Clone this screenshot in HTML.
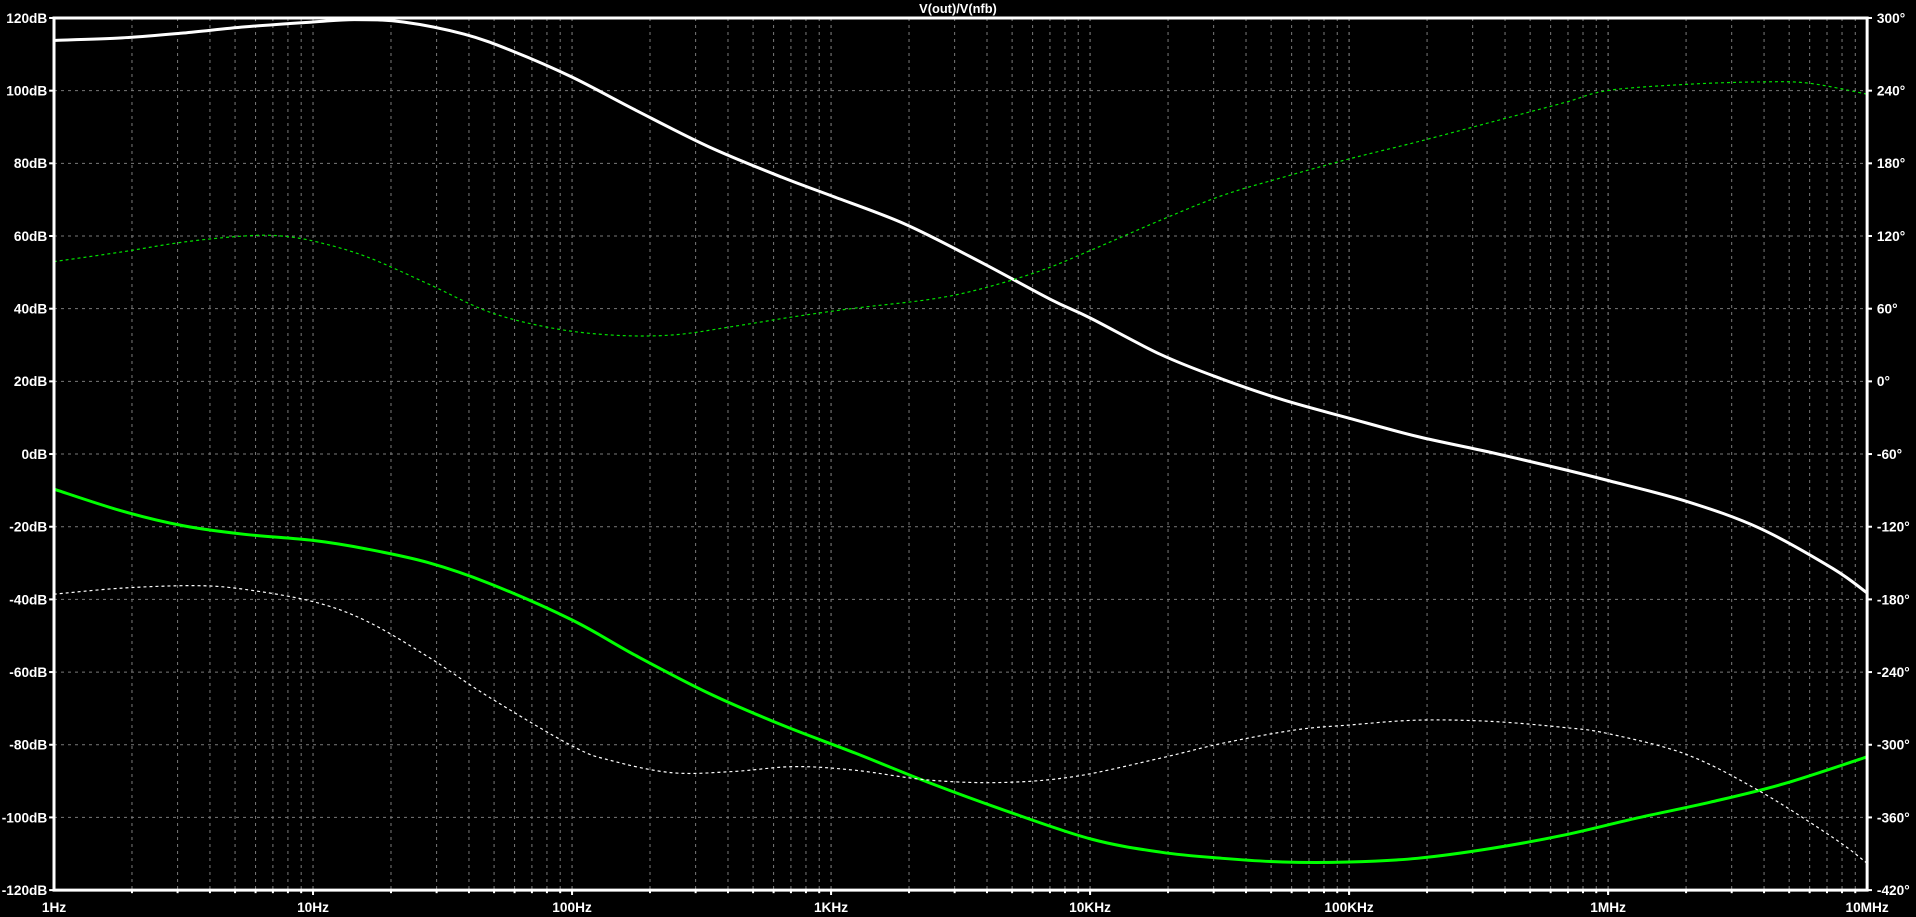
<!DOCTYPE html>
<html><head><meta charset="utf-8">
<style>
html,body{margin:0;padding:0;background:#000;overflow:hidden}
svg{display:block}
text{font-family:"Liberation Sans",sans-serif;fill:#fff}
</style></head>
<body>
<svg id="s" width="1916" height="917" viewBox="0 0 1568 750" preserveAspectRatio="none" xmlns="http://www.w3.org/2000/svg">
<rect width="1568" height="750" fill="#000"/>
<g id="grid"></g>
<g id="curves"></g>
<g id="axes"></g>
<text x="784" y="10.5" font-size="10.5" font-weight="bold" text-anchor="middle">V(out)/V(nfb)</text>
</svg>
<script>
var NS="http://www.w3.org/2000/svg";
var L=44.2,R=1528,T=14.7,B=728,D=(R-L)/7,DY=(B-T)/12;
function el(p,n,a,txt){var e=document.createElementNS(NS,n);for(var k in a)e.setAttribute(k,a[k]);if(txt!==undefined)e.textContent=txt;document.getElementById(p).appendChild(e);return e;}
for(var d=0;d<7;d++){for(var m=1;m<=10;m++){var x=L+D*(d+Math.log10(m));if(m==1&&d==0)continue;if(m==10&&d==6)continue;
el("grid","line",{x1:x,y1:T,x2:x,y2:B,stroke:"#7a7a7a","stroke-width":1,"stroke-dasharray":"3,4","vector-effect":"non-scaling-stroke"});
el("axes","line",{x1:x,y1:B,x2:x,y2:B+(m==10?4:2.5),stroke:"#fff","stroke-width":2,"vector-effect":"non-scaling-stroke"});}}
for(var i=1;i<12;i++){var y=T+DY*i;el("grid","line",{x1:L,y1:y,x2:R,y2:y,stroke:"#7a7a7a","stroke-width":1,"stroke-dasharray":"3,4","vector-effect":"non-scaling-stroke"});}
el("axes","rect",{x:L,y:T,width:R-L,height:B-T,fill:"none",stroke:"#fff","stroke-width":3,"vector-effect":"non-scaling-stroke"});
for(var i=0;i<=12;i++){var y=T+DY*i;var db=120-20*i;var ph=300-60*i;
el("axes","line",{x1:L-4,y1:y,x2:L,y2:y,stroke:"#fff","stroke-width":2,"vector-effect":"non-scaling-stroke"});
el("axes","line",{x1:R,y1:y,x2:R+4,y2:y,stroke:"#fff","stroke-width":2,"vector-effect":"non-scaling-stroke"});
el("axes","text",{x:L-5.5,y:y+4,"font-size":11.2,"font-weight":"bold","text-anchor":"end"},db+"dB");
el("axes","text",{x:R+8,y:y+4,"font-size":11.2,"font-weight":"bold"},ph+"\u00b0");}
var fl=["1Hz","10Hz","100Hz","1KHz","10KHz","100KHz","1MHz","10MHz"];
for(var d=0;d<8;d++){el("axes","text",{x:L+D*d,y:746,"font-size":11.2,"font-weight":"bold","text-anchor":"middle"},fl[d]);}
function curve(pts,col,w,dash){
 var s="M"+pts[0][0]+","+pts[0][1];
 for(var i=0;i<pts.length-1;i++){var p0=pts[i-1]||pts[i],p1=pts[i],p2=pts[i+1],p3=pts[i+2]||p2;
 s+=" C"+(p1[0]+(p2[0]-p0[0])/6)+","+(p1[1]+(p2[1]-p0[1])/6)+" "+(p2[0]-(p3[0]-p1[0])/6)+","+(p2[1]-(p3[1]-p1[1])/6)+" "+p2[0]+","+p2[1];}
 var a={d:s,fill:"none",stroke:col,"stroke-width":w,"vector-effect":"non-scaling-stroke"};if(dash)a["stroke-dasharray"]=dash;
 el("curves","path",a);}
curve([[44,33],[100,31],[150,27],[200,22],[256,18],[290,16],[330,18],[380,28],[420,42],[468,63],[520,90],[580,120],[640,145],[680,160],[740,183],[800,213],[860,245],[892,260],[950,290],[1000,310],[1050,327],[1104,342],[1160,357],[1220,370],[1280,384],[1316,393],[1380,410],[1440,432],[1500,465],[1528,485]],"#fff",3);
curve([[44,214],[100,206],[150,198],[200,193],[230,193],[260,198],[300,210],[350,232],[400,255],[450,268],[500,274],[550,274],[600,267],[650,259],[700,252],[760,245],[800,237],[850,222],[892,205],[950,180],[1000,160],[1050,145],[1104,130],[1160,116],[1220,100],[1280,84],[1316,74],[1380,69],[1440,67],[1480,68],[1528,77]],"#00e000",1.2,"3,3");
curve([[44,400],[100,418],[150,430],[200,437],[256,442],[300,449],[350,460],[400,477],[468,507],[520,536],[580,567],[640,593],[700,616],[760,640],[820,662],[892,686],[950,697],[1000,702],[1050,705],[1104,705],[1160,702],[1220,694],[1280,683],[1340,669],[1400,656],[1460,641],[1528,619]],"#00ff00",3);
curve([[44,486],[100,481],[160,479],[200,482],[256,492],[300,508],[350,537],[400,570],[468,610],[500,622],[550,632],[600,631],[650,627],[700,630],[760,638],[820,640],[880,635],[950,620],[1000,608],[1060,597],[1104,593],[1160,589],[1220,590],[1280,595],[1316,600],[1380,617],[1440,647],[1500,685],[1528,706]],"#fff",1.2,"3,3");
</script>
</body></html>
